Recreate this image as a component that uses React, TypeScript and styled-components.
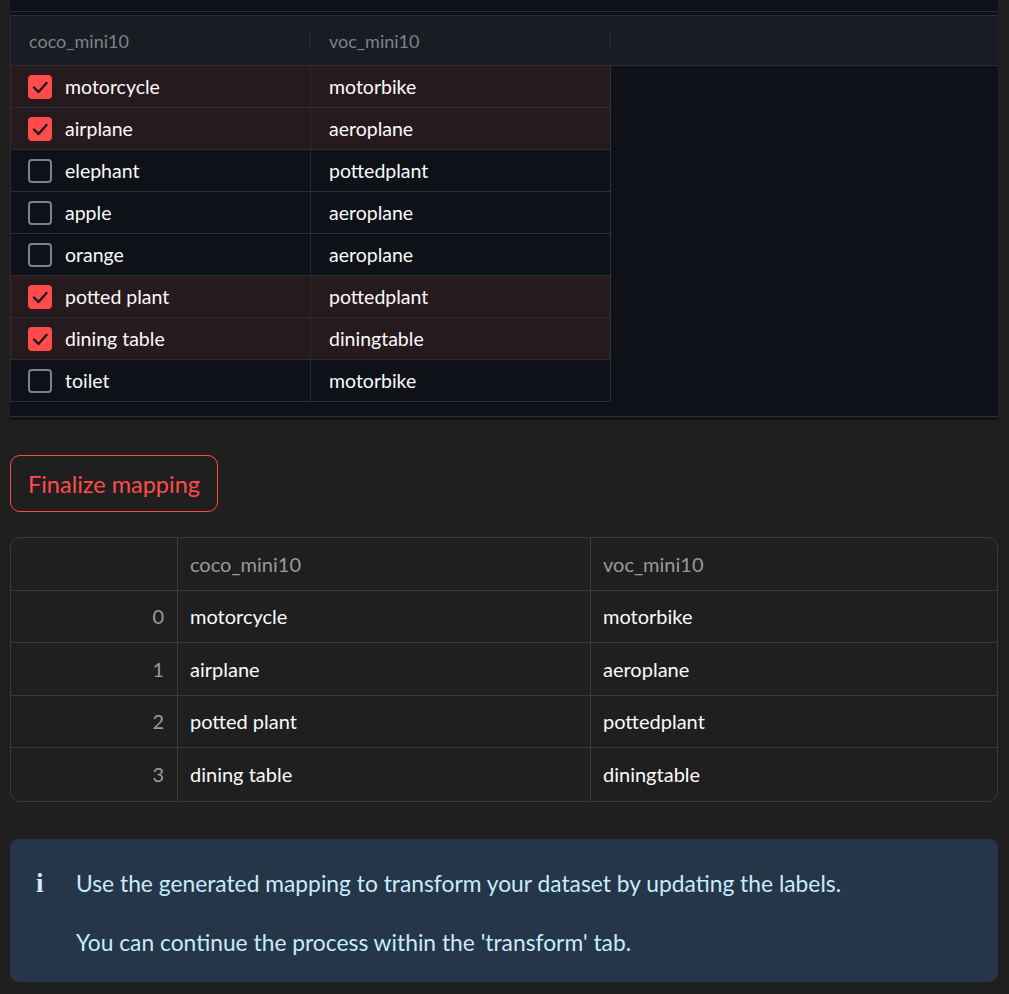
import React from "react";
import styled, { createGlobalStyle } from "styled-components";

const Global = createGlobalStyle`
  html, body { margin: 0; padding: 0; background: #1f1f1f; }
  body { font-family: "Lato", "Noto Sans", sans-serif; color: #fafafa; }
  * { box-sizing: border-box; }
`;

const Page = styled.div`
  width: 1009px;
  padding: 0 11px 12px 10px;
  display: flex;
  flex-direction: column;
`;

const EditorPanel = styled.div`
  background: #0e1117;
  height: 420px;
  display: flex;
  flex-direction: column;
`;

const TopRule = styled.div`
  height: 1px;
  margin-top: 11px;
  margin-bottom: 3px;
  background: #2b2e35;
`;

const EditorHeader = styled.div`
  height: 51px;
  background: #1a1c24;
  border-top: 1px solid #2b2e35;
  border-bottom: 1px solid #2b2e35;
  border-left: 1px solid #2b2e35;
  display: flex;
`;

const HeaderCell = styled.div`
  width: 300px;
  position: relative;
  display: flex;
  align-items: center;
  padding-left: 18px;
  font-size: 18px;
  color: #7f828b;
  &::after {
    content: "";
    position: absolute;
    right: 0;
    top: 17px;
    width: 2px;
    height: 14px;
    background: #262932;
  }
`;

const Rows = styled.div`
  width: 601px;
  border-right: 1px solid #2f3239;
  border-left: 1px solid #2b2e35;
`;

const EditorRow = styled.div<{ $selected: boolean }>`
  height: 42px;
  display: flex;
  border-bottom: 1px solid #2b2e35;
  background: ${(p) => (p.$selected ? "#271a1f" : "#0e1117")};
`;

const EditorCell = styled.div<{ $first?: boolean }>`
  width: ${(p) => (p.$first ? "300px" : "299px")};
  display: flex;
  align-items: center;
  gap: 13px;
  padding-left: ${(p) => (p.$first ? "17px" : "18px")};
  font-size: 19.5px;
  color: #fafafa;
  border-right: ${(p) => (p.$first ? "1px solid #262932" : "none")};
`;

const Box = styled.span<{ $checked: boolean }>`
  width: 24px;
  height: 24px;
  border-radius: 4px;
  flex: none;
  display: flex;
  align-items: center;
  justify-content: center;
  background: ${(p) => (p.$checked ? "#ff4b4b" : "transparent")};
  border: ${(p) => (p.$checked ? "none" : "2px solid #7d8088")};
`;

const Spacer = styled.div`
  flex: 1;
`;

const ScrollRule = styled.div`
  height: 1px;
  background: #2f3239;
  margin-bottom: 3px;
`;

const Button = styled.button`
  margin-top: 35px;
  align-self: flex-start;
  width: 208px;
  height: 57px;
  border: 1px solid #ff4b4b;
  border-radius: 10px;
  background: transparent;
  color: #ff4b4b;
  font-family: inherit;
  font-size: 23.5px;
  padding: 0;
`;

const Table = styled.div`
  margin-top: 25px;
  border: 1px solid #393939;
  border-radius: 10px;
  overflow: hidden;
  background: #1f1f1f;
`;

const TRow = styled.div<{ $last?: boolean }>`
  display: grid;
  grid-template-columns: 167px 413px 1fr;
  height: 52.5px;
  border-bottom: ${(p) => (p.$last ? "none" : "1px solid #393939")};
`;

const TCell = styled.div<{ $kind: "index" | "head" | "body" }>`
  display: flex;
  align-items: center;
  justify-content: ${(p) => (p.$kind === "index" ? "flex-end" : "flex-start")};
  padding: ${(p) => (p.$kind === "index" ? "0 13px 0 0" : "0 0 0 12px")};
  font-size: 20px;
  color: ${(p) => (p.$kind === "body" ? "#fafafa" : "#9a9a9a")};
  border-right: 1px solid #393939;
  &:last-child { border-right: none; }
`;

const Info = styled.div`
  margin-top: 37px;
  background: #243647;
  border-radius: 9px;
  padding: 29px 20px 25px 24px;
  display: flex;
  color: #c7ebff;
`;

const InfoIcon = styled.span`
  width: 42px;
  flex: none;
  font-family: "Liberation Serif", "DejaVu Serif", serif;
  font-weight: bold;
  font-size: 27px;
  line-height: 30px;
  padding-left: 2px;
`;

const InfoText = styled.div`
  font-size: 22.8px;
  line-height: 30px;
  p { margin: 0; }
  p + p { margin-top: 29px; }
`;

const Check = () => (
  <svg width="24" height="24" viewBox="0 0 24 24">
    <path d="M6 12.5l4.5 4.5L18.5 8" fill="none" stroke="#1a1a1a" strokeWidth="2.4" strokeLinecap="round" strokeLinejoin="round" />
  </svg>
);

const editorRows: [boolean, string, string][] = [
  [true, "motorcycle", "motorbike"],
  [true, "airplane", "aeroplane"],
  [false, "elephant", "pottedplant"],
  [false, "apple", "aeroplane"],
  [false, "orange", "aeroplane"],
  [true, "potted plant", "pottedplant"],
  [true, "dining table", "diningtable"],
  [false, "toilet", "motorbike"],
];

const result: [string, string][] = editorRows.filter((r) => r[0]).map((r) => [r[1], r[2]]);

export default function App() {
  return (
    <Page>
      <Global />
      <EditorPanel>
        <TopRule />
        <EditorHeader>
          <HeaderCell>coco_mini10</HeaderCell>
          <HeaderCell>voc_mini10</HeaderCell>
        </EditorHeader>
        <Rows>
          {editorRows.map(([sel, a, b]) => (
            <EditorRow key={a} $selected={sel}>
              <EditorCell $first>
                <Box $checked={sel}>{sel && <Check />}</Box>
                {a}
              </EditorCell>
              <EditorCell>{b}</EditorCell>
            </EditorRow>
          ))}
        </Rows>
        <Spacer />
        <ScrollRule />
      </EditorPanel>
      <Button>Finalize mapping</Button>
      <Table>
        <TRow>
          <TCell $kind="index" />
          <TCell $kind="head">coco_mini10</TCell>
          <TCell $kind="head">voc_mini10</TCell>
        </TRow>
        {result.map(([a, b], i) => (
          <TRow key={a} $last={i === result.length - 1}>
            <TCell $kind="index">{i}</TCell>
            <TCell $kind="body">{a}</TCell>
            <TCell $kind="body">{b}</TCell>
          </TRow>
        ))}
      </Table>
      <Info>
        <InfoIcon>i</InfoIcon>
        <InfoText>
          <p>Use the generated mapping to transform your dataset by updating the labels.</p>
          <p>You can continue the process within the 'transform' tab.</p>
        </InfoText>
      </Info>
    </Page>
  );
}
